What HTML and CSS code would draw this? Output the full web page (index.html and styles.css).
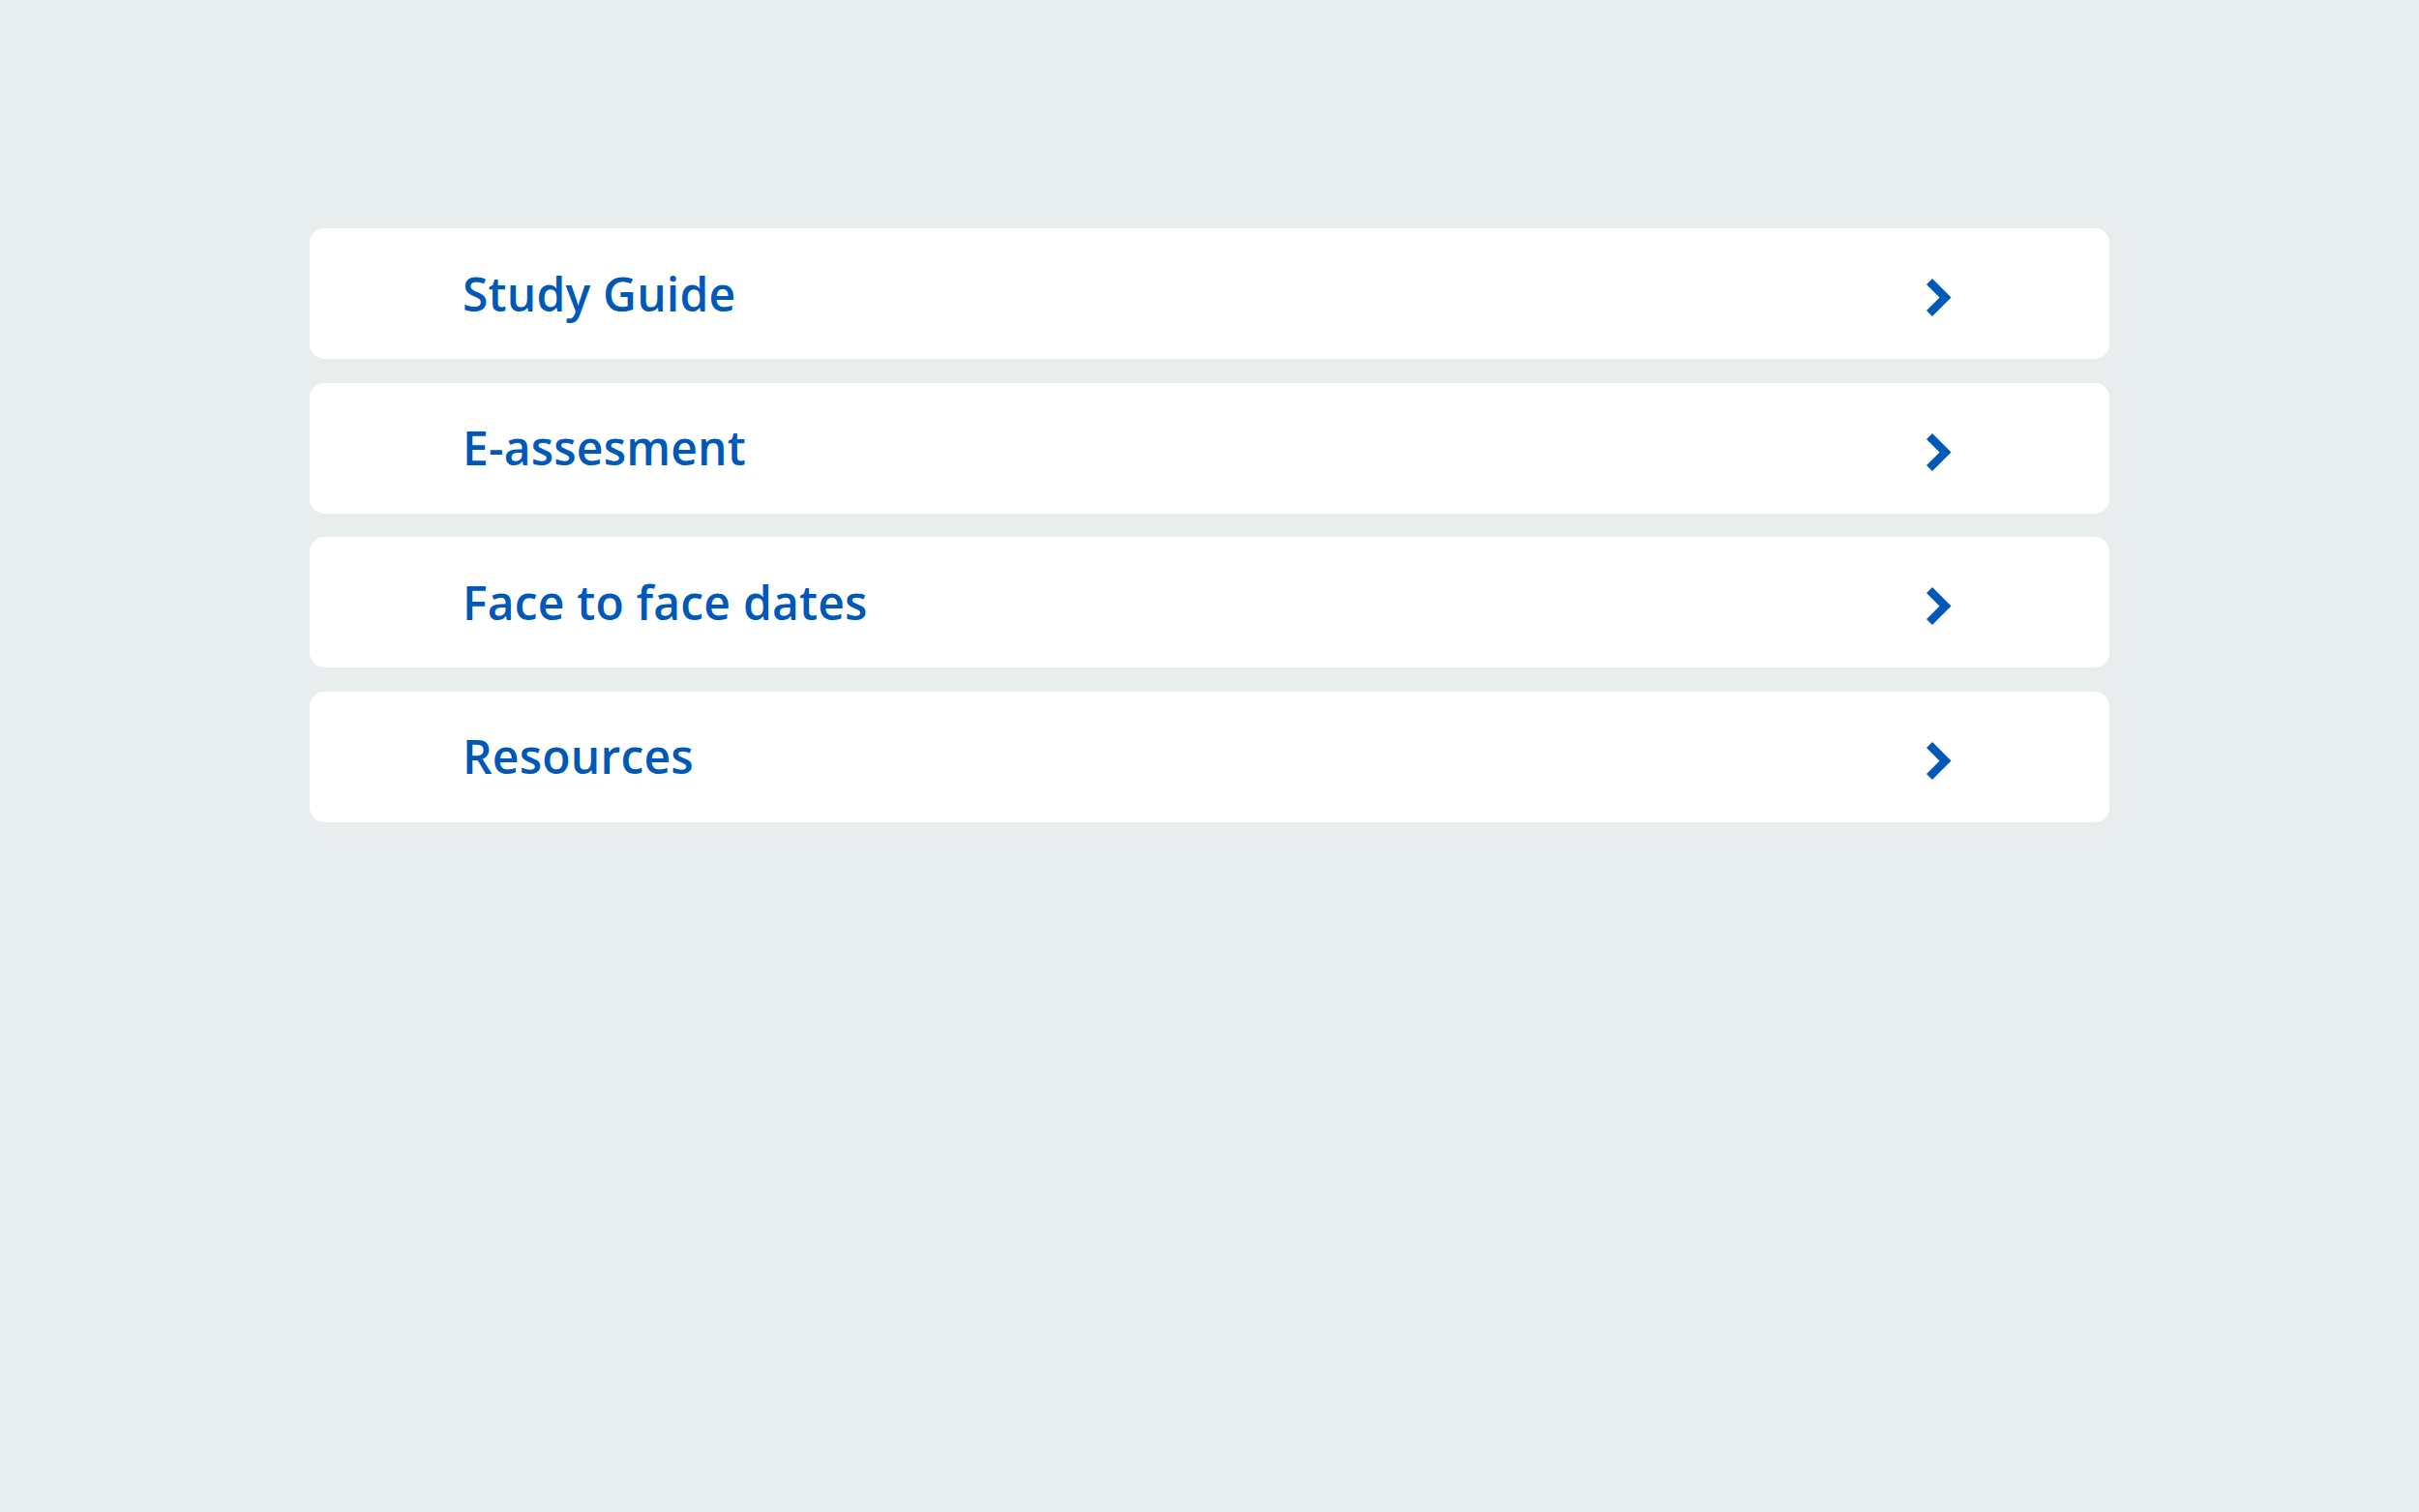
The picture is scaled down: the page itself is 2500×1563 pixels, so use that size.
FILE: index.html
```html
<!DOCTYPE html>
<html lang="en">
<head>
<meta charset="utf-8">
<title>Course menu</title>
<link rel="stylesheet" href="styles.css">
</head>
<body>
<main class="page">
  <ul class="menu">
    <li class="menu-item">
      <a class="menu-link" href="#">
        <span class="menu-label">Study Guide</span>
        <svg class="chevron" viewBox="0 0 26 39" width="26" height="39" aria-hidden="true"><polygon points="6,0 25.5,19.5 6,39 0,33 13.5,19.5 0,6"/></svg>
      </a>
    </li>
    <li class="menu-item">
      <a class="menu-link" href="#">
        <span class="menu-label">E-assesment</span>
        <svg class="chevron" viewBox="0 0 26 39" width="26" height="39" aria-hidden="true"><polygon points="6,0 25.5,19.5 6,39 0,33 13.5,19.5 0,6"/></svg>
      </a>
    </li>
    <li class="menu-item">
      <a class="menu-link" href="#">
        <span class="menu-label">Face to face dates</span>
        <svg class="chevron" viewBox="0 0 26 39" width="26" height="39" aria-hidden="true"><polygon points="6,0 25.5,19.5 6,39 0,33 13.5,19.5 0,6"/></svg>
      </a>
    </li>
    <li class="menu-item">
      <a class="menu-link" href="#">
        <span class="menu-label">Resources</span>
        <svg class="chevron" viewBox="0 0 26 39" width="26" height="39" aria-hidden="true"><polygon points="6,0 25.5,19.5 6,39 0,33 13.5,19.5 0,6"/></svg>
      </a>
    </li>
  </ul>
</main>
</body>
</html>
```

FILE: styles.css
```css
html, body {
  margin: 0;
  padding: 0;
  background: #e8eded;
}

body {
  font-family: "Open Sans", "Liberation Sans", sans-serif;
  min-height: 100vh;
}

.page {
  padding-top: 236px;
  display: flex;
  justify-content: center;
}

.menu {
  list-style: none;
  margin: 0;
  padding: 0;
  width: 1860px;
  display: flex;
  flex-direction: column;
  gap: 24.5px;
}

.menu-item {
  background: #ffffff;
  border-radius: 15px;
  height: 135px;
}

.menu-link {
  display: flex;
  align-items: center;
  justify-content: space-between;
  height: 100%;
  padding: 0 163px 0 158px;
  box-sizing: border-box;
  text-decoration: none;
  color: #0058b8;
}

.menu-label {
  font-size: 48px;
  font-weight: 600;
  letter-spacing: 0.2px;
  line-height: 1;
}

.chevron {
  fill: #0058b8;
  margin-top: 8px;
  flex: none;
}
```
